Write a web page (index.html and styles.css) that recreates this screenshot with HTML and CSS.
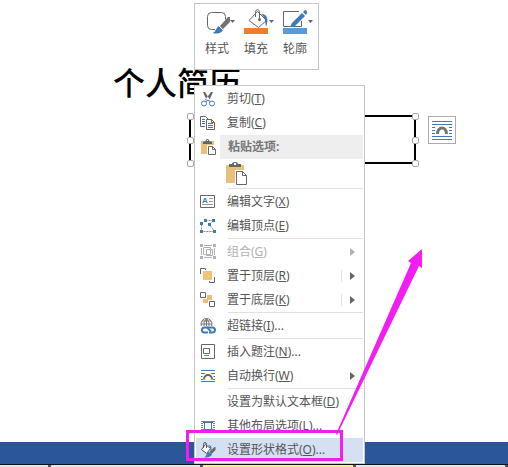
FILE: index.html
```html
<!DOCTYPE html>
<html lang="zh-CN">
<head>
    <meta charset="UTF-8">
    <meta name="viewport" content="width=device-width, initial-scale=1.0">
    <title>个人简历</title>
    <link rel="stylesheet" href="styles.css">
</head>
<body>
    <main class="document">
        <h1>个人简历</h1>

        <div class="text-box">
            <i class="handle top left"></i>
            <i class="handle middle left"></i>
            <i class="handle bottom left"></i>
            <i class="handle top right"></i>
            <i class="handle middle right"></i>
            <i class="handle bottom right"></i>
        </div>

        <button class="layout-options" aria-label="布局选项">
            <svg width="20" height="20" viewBox="0 0 20 20">
                <path d="M0 1.5h20M0 4.5h20M0 7.5h3M17 7.5h3M0 10.5h3M17 10.5h3M0 13.5h3M17 13.5h3M0 16.5h20M0 19.5h20" stroke="#3e7ab5"/>
                <path d="M5.5 14c0-8 9-8 9 0" fill="none" stroke="#737373" stroke-width="3"/>
            </svg>
        </button>
    </main>

    <footer class="status-bar"></footer>
    <div class="taskbar"><span></span><span></span><span class="active"></span><span></span></div>

    <div class="mini-toolbar">
        <button>
            <svg width="32" height="26" viewBox="0 0 32 26">
                <path d="M10 21.500H6.500q-4 0-4-4v-9q0-4 4-4h10q4 0 4 4v3" fill="none" stroke="#666"/>
                <path d="M25 9v5l-7 7-3-3 8-9z" fill="#737373"/>
                <path d="M14.500 18l4 3c-2 5-7 5-11 4 4-1 3-6 7-7z" fill="#3e7ab5"/>
                <path d="M14 18l4 4" stroke="#fff"/>
                <path d="M25 12h5l-2.500 3z" fill="#666"/>
            </svg>
            样式
        </button>
        <button>
            <svg width="32" height="26" viewBox="0 0 32 26">
                <path d="M13.500 3.500l9 9-8 7-9.500-7z" fill="#fff" stroke="#666"/>
                <path d="M11.500 9V5q0-3.500 2-3.500t2 3.500v6" fill="none" stroke="#666"/>
                <circle cx="15.500" cy="11.500" r="1.500" fill="#666"/>
                <path d="M17 6c8 0 7 8 5 13-1-5 0-9-5-13z" fill="#3e7ab5"/>
                <path d="M0 20h24v6H0z" fill="#ed7d31"/>
                <path d="M25 12h5l-2.500 3z" fill="#666"/>
            </svg>
            填充
        </button>
        <button>
            <svg width="32" height="26" viewBox="0 0 32 26">
                <path d="M16 3.500H.5v15h18V13" fill="none" stroke="#666"/>
                <path d="M19 5l3 3-10 10-5 1 2-4z" fill="#3e7ab5"/>
                <path d="M20 4l2-2q2 0 2 3l-1 2z" fill="#3e7ab5"/>
                <path d="M0 20h24v6H0z" fill="#5b9bd5"/>
                <path d="M25 12h5l-2.500 3z" fill="#666"/>
            </svg>
            轮廓
        </button>
    </div>

    <div class="context-menu" role="menu">
        <button class="item" role="menuitem">
            <svg class="icon" viewBox="0 0 16 16">
                <path d="M3 1h2l5 8-3 1zM13 1h-2L5 9l4 1z" fill="#666"/>
                <g fill="none" stroke="#3e7ab5"><circle cx="4" cy="12.500" r="2.500"/><circle cx="12" cy="12.500" r="2.500"/><path d="M6 10.500l2-1.500 2 1.500"/></g>
            </svg>
            <span>剪切(<u>T</u>)</span>
        </button>
        <button class="item" role="menuitem">
            <svg class="icon" viewBox="0 0 16 16">
                <path d="M5 11.500H.5v-10h5l3 3" fill="none" stroke="#666"/>
                <path d="M2 4.500h3M2 6.500h3M2 8.500h3" stroke="#3e7ab5"/>
                <path d="M6.500 4.500h5l3 3v7h-8zM11.500 4.500v3h3" fill="#fff" stroke="#666"/>
                <path d="M8 8.500h5M8 10.500h5M8 12.500h5" stroke="#3e7ab5"/>
            </svg>
            <span>复制(<u>C</u>)</span>
        </button>
        <div class="item heading">
            <svg class="icon" viewBox="0 0 16 16">
                <path d="M1 2h13v13H1z" fill="#e8bf7b"/>
                <path d="M3 5V2.500h2.500q0-2.500 2-2.500t2 2.500H12V5z" fill="#666"/>
                <path d="M7 1h1v1H7z" fill="#fff"/>
                <path d="M7 6h9v10H7z" fill="#fff"/>
                <path d="M8.500 7.500h4l3 3v5h-7zM12.500 7.500v3h3" fill="#fff" stroke="#666"/>
            </svg>
            <span>粘贴选项:</span>
        </div>
        <div class="paste-options">
            <button aria-label="粘贴">
                <svg width="24" height="24" viewBox="0 0 24 24">
                    <path d="M1 3h18v18H1z" fill="#e8bf7b"/>
                    <path d="M4 5V2h3q0-2 3-2t3 2h3v3z" fill="#666"/>
                    <path d="M9 1h2v2H9z" fill="#fff"/>
                    <path d="M10 8h13v16H10z" fill="#fff"/>
                    <path d="M11.500 9.500h6l4 4v9h-10zM17.500 9.500v4h4" fill="#fff" stroke="#666"/>
                </svg>
            </button>
        </div>
        <hr>
        <button class="item" role="menuitem">
            <svg class="icon" viewBox="0 0 16 16">
                <path d="M.5 1.500h14v12H.5z" fill="#fff" stroke="#666"/>
                <text x="2" y="9" class="icon-letter">A</text>
                <path d="M9 4.500h4M9 7.500h4M2 10.500h11" stroke="#999"/>
            </svg>
            <span>编辑文字(<u>X</u>)</span>
        </button>
        <button class="item" role="menuitem">
            <svg class="icon" viewBox="0 0 16 16">
                <path d="M5.500 2.500l-4 3v8h12M5.500 2.500h8l-4 4 5 7" fill="none" stroke="#888" stroke-dasharray="2 1"/>
                <path d="M4 1h3v3H4zM12 1h3v3h-3zM8 5h3v3H8zM0 4h3v3H0zM0 12h3v3H0zM13 12h3v3h-3z" fill="#3e7ab5"/>
            </svg>
            <span>编辑顶点(<u>E</u>)</span>
        </button>
        <hr>
        <button class="item" role="menuitem" disabled>
            <svg class="icon" viewBox="0 0 16 16">
                <path d="M1.500 4v7M14.500 4v7M4 1.500h8M4 13.500h8" stroke="#b1b1b1"/>
                <path d="M3.500 3.500h7v7h-7zM6.500 5.500h6v6h-6z" fill="none" stroke="#b1b1b1"/>
                <path d="M0 0h3v3H0zM13 0h3v3h-3zM0 12h3v3H0zM13 12h3v3h-3z" fill="#b1b1b1"/>
            </svg>
            <span>组合(<u>G</u>)</span>
            <i class="arrow"></i>
        </button>
        <button class="item split" role="menuitem">
            <svg class="icon" viewBox="0 0 16 16">
                <path d="M.5 6V.5h5V2M14.500 9v5.500h-5V13" fill="none" stroke="#666"/>
                <path d="M3 3h9v9H3z" fill="#f0c57a"/>
            </svg>
            <span>置于顶层(<u>R</u>)</span>
            <i class="arrow"></i>
        </button>
        <button class="item split" role="menuitem">
            <svg class="icon" viewBox="0 0 16 16">
                <path d="M7 3h5v5H7zM3 7h5v4H3z" fill="#e8bf7b"/>
                <path d="M.5.5h5v5h-5zM9.500 9.500h5v5h-5z" fill="#fff" stroke="#666"/>
            </svg>
            <span>置于底层(<u>K</u>)</span>
            <i class="arrow"></i>
        </button>
        <hr>
        <button class="item" role="menuitem">
            <svg class="icon" viewBox="0 0 16 16">
                <circle cx="6.500" cy="6" r="5.500" fill="none" stroke="#777"/>
                <path d="M1 6h11M2 3h9M6.500 1v8M4 9Q3 4 6.500.5 10 4 9 8" fill="none" stroke="#777"/>
                <path d="M1 8h15v8H1z" fill="#fff"/>
                <g fill="none" stroke="#3e7ab5" stroke-width="2"><path d="M8 14.500H4.500q-2.500 0-2.500-2.500t2.500-2.500H7l4 4"/><path d="M7 9.500h5q3 0 3 2.500t-3 2.500H9"/></g>
            </svg>
            <span>超链接(<u>I</u>)...</span>
        </button>
        <hr>
        <button class="item" role="menuitem">
            <svg class="icon" viewBox="0 0 16 16">
                <path d="M1.500.5h13v14h-13z" fill="#fff" stroke="#666"/>
                <path d="M3.500 4.500h6v5h-6z" fill="none" stroke="#666"/>
                <path d="M4 11.500h5" stroke="#d0623f"/>
            </svg>
            <span>插入题注(<u>N</u>)...</span>
        </button>
        <button class="item" role="menuitem">
            <svg class="icon" viewBox="0 0 16 16">
                <path d="M1 2.500h14M1 13.500h14M1 5.500h14M1 8.500h2M13 8.500h2M1 11.500h2M13 11.500h2" stroke="#3e7ab5"/>
                <path d="M4 11c0-6 8-6 8 0" fill="none" stroke="#fff" stroke-width="4"/>
                <path d="M4 11.500c0-6 8-6 8 0" fill="none" stroke="#666" stroke-width="2"/>
            </svg>
            <span>自动换行(<u>W</u>)</span>
            <i class="arrow"></i>
        </button>
        <hr>
        <button class="item" role="menuitem">
            <i class="icon"></i>
            <span>设置为默认文本框(<u>D</u>)</span>
        </button>
        <button class="item" role="menuitem">
            <svg class="icon" viewBox="0 0 16 16">
                <path d="M1 3.500h14M1 5.500h2M1 7.500h2M1 9.500h2M1 11.500h2M13 5.500h2M13 7.500h2M13 9.500h2M13 11.500h2" stroke="#888"/>
                <path d="M4.500 4.500h7v7h-7z" fill="#fff" stroke="#3e7ab5"/>
                <path d="M3 3h2v2H3zM11 3h2v2h-2zM3 11h2v2H3zM11 11h2v2h-2z" fill="#3e7ab5"/>
            </svg>
            <span>其他布局选项(<u>L</u>)...</span>
        </button>
        <button class="item selected" role="menuitem">
            <svg class="icon" viewBox="0 0 16 16">
                <path d="M5.500 2.500l5 4-4 5-5-4z" fill="#fff" stroke="#555"/>
                <path d="M3.500 6V2.500q0-2 1.500-2t1.500 2V6" fill="none" stroke="#555"/>
                <path d="M8 3c4 0 4 3 3 7-1-3 0-5-3-7z" fill="#3e7ab5"/>
                <path d="M15.500 5v3l-4 4-2-2 5-5z" fill="#666"/>
                <path d="M9 10l3 2.500c-2 3-5 3-8 3 3-1 2-5 5-5.500z" fill="#3e7ab5"/>
            </svg>
            <span>设置形状格式(<u>O</u>)...</span>
        </button>
    </div>

    <div class="highlight-box"></div>
    <svg class="pointer" width="90" height="190" viewBox="0 0 90 190">
        <path d="M86 0v19l-3-2L1 186l-1-1L75 14l-3-2z" fill="#f31df3"/>
    </svg>
</body>
</html>
```
FILE: styles.css
```css
* {
    box-sizing: border-box;
}
body {
    font-family: "Noto Sans", "Noto Sans CJK SC", sans-serif;
    font-size: 12px;
    line-height: 16px;
    color: #555;
    margin: 0;
    min-height: 100vh;
    background: #fff;
    display: flex;
    flex-direction: column;
    position: relative;
    overflow: hidden;
}
button {
    font: inherit;
    color: inherit;
    background: none;
    border: none;
    padding: 0;
    cursor: pointer;
}
svg {
    display: block;
}

/* document area */
.document {
    flex: 1;
}
h1 {
    margin: 0;
    padding: 59px 0 0 113px;
    font-family: "Noto Sans CJK SC", sans-serif;
    font-size: 32px;
    line-height: 44px;
    font-weight: 500;
    color: #000;
}
.text-box {
    position: absolute;
    left: 189px;
    top: 115px;
    width: 227px;
    height: 49px;
    border: 2px solid #000;
}
.handle {
    position: absolute;
    width: 7px;
    height: 7px;
    background: #fff;
    border: 1px solid #aaa;
    border-radius: 2px;
}
.handle.top { top: -4px; }
.handle.middle { top: 20px; }
.handle.bottom { bottom: -5px; }
.handle.left { left: -4px; }
.handle.right { right: -5px; }
.layout-options {
    position: absolute;
    left: 428px;
    top: 116px;
    width: 28px;
    height: 28px;
    display: grid;
    place-items: center;
    background: #fff;
    border: 1px solid #ababab;
}

/* bottom bars */
.status-bar {
    height: 22px;
    background: #2b579a;
}
.taskbar {
    height: 3px;
    display: grid;
    grid-template-columns: 1fr 3fr 3fr 3fr;
    border-top: 1px solid #111;
}
.taskbar span {
    background: #dfe6f0;
    border-right: 3px solid #556;
}
.taskbar .active {
    background: #f7ee9b;
}

/* mini toolbar */
.mini-toolbar {
    position: absolute;
    left: 194px;
    top: 3px;
    display: flex;
    gap: 7px;
    padding: 4px 3px 12px 10px;
    background: #fff;
    border: 1px solid #c6c6c6;
}
.mini-toolbar button {
    width: 32px;
    text-align: left;
}
.mini-toolbar svg {
    margin-bottom: 7px;
}

/* context menu */
.context-menu {
    position: absolute;
    left: 194px;
    top: 85px;
    width: 171px;
    padding: 1px;
    background: #fff;
    border: 1px solid #c6c6c6;
}
.item {
    display: flex;
    align-items: center;
    width: 100%;
    height: 24px;
    padding: 0 8px 0 4px;
    text-align: left;
    white-space: nowrap;
}
.item span {
    flex: 1;
}
.icon {
    flex: none;
    width: 16px;
    height: 16px;
    margin-right: 11px;
}
.icon-letter {
    font: bold 8px "Liberation Sans", sans-serif;
    fill: #3e7ab5;
}
.item.heading {
    padding-right: 0;
    font-weight: bold;
    color: #777;
}
.heading .icon {
    margin-right: 4px;
}
.heading span {
    padding: 4px 8px;
    background: #eee;
}
.item:disabled {
    color: #b1b1b1;
}
.item.selected {
    background: #d5e1f2;
}
.arrow {
    border: 4px solid transparent;
    border-left: 5px solid #666;
    border-right: none;
}
.item:disabled .arrow {
    border-left-color: #b1b1b1;
}
.split .arrow {
    position: relative;
}
.split .arrow::before {
    content: "";
    position: absolute;
    left: -14px;
    top: -6px;
    height: 12px;
    border-left: 1px solid #e1e1e1;
}
.paste-options {
    height: 29px;
    padding: 3px 0 0 29px;
}
hr {
    height: 2px;
    margin: 0 0 0 32px;
    border: none;
    border-top: 1px solid #e1e1e1;
}

/* annotation */
.highlight-box {
    position: absolute;
    left: 186px;
    top: 430px;
    width: 157px;
    height: 31px;
    border: 3px solid #f31df3;
}
.pointer {
    position: absolute;
    left: 336px;
    top: 249px;
}
```
